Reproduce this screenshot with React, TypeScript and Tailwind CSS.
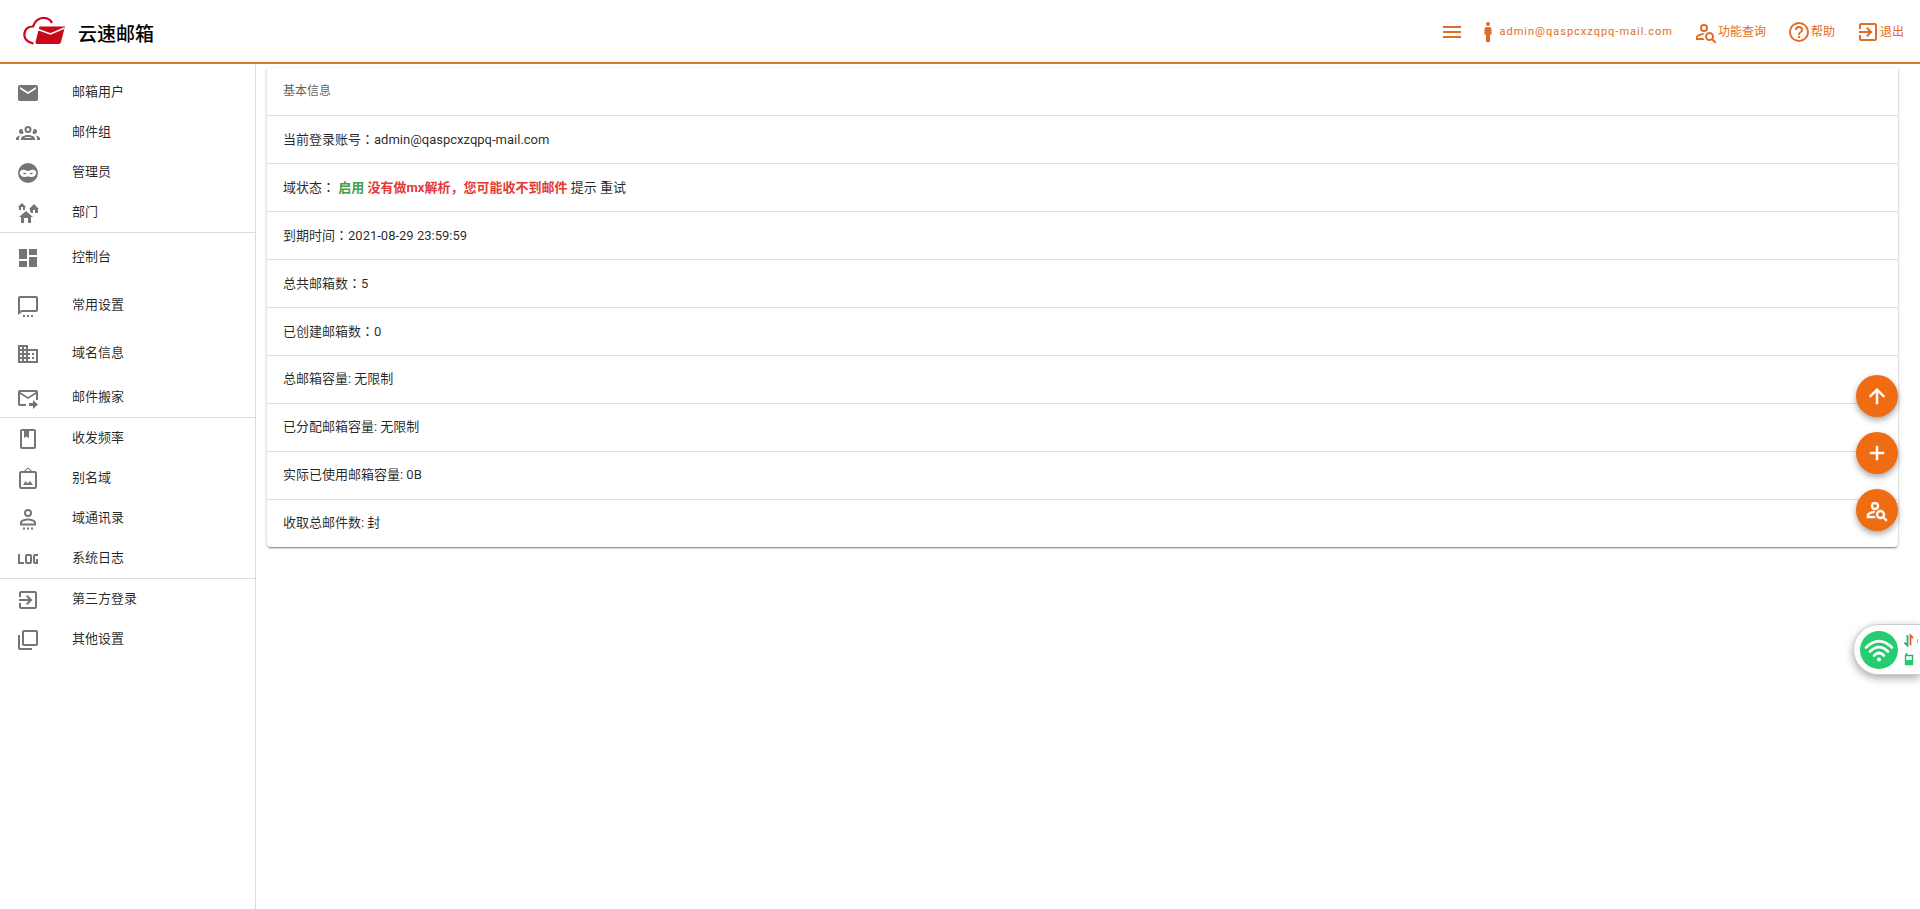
import React from 'react';

const icons = {
  email: 'M20 8l-8 5-8-5V6l8 5 8-5m0-2H4c-1.11 0-2 .89-2 2v12a2 2 0 0 0 2 2h16a2 2 0 0 0 2-2V6c0-1.11-.9-2-2-2z',
  group:
    'M12,5A3.5,3.5 0 0,0 8.5,8.5A3.5,3.5 0 0,0 12,12A3.5,3.5 0 0,0 15.5,8.5A3.5,3.5 0 0,0 12,5M12,7A1.5,1.5 0 0,1 13.5,8.5A1.5,1.5 0 0,1 12,10A1.5,1.5 0 0,1 10.5,8.5A1.5,1.5 0 0,1 12,7M5.5,8A2.5,2.5 0 0,0 3,10.5C3,11.44 3.53,12.25 4.29,12.68C4.65,12.88 5.06,13 5.5,13C5.94,13 6.35,12.88 6.71,12.68C7.08,12.47 7.39,12.17 7.62,11.81C6.89,10.86 6.5,9.7 6.5,8.5C6.5,8.41 6.5,8.31 6.5,8.22C6.2,8.08 5.86,8 5.5,8M18.5,8C18.14,8 17.8,8.08 17.5,8.22C17.5,8.31 17.5,8.41 17.5,8.5C17.5,9.7 17.11,10.86 16.38,11.81C16.5,12 16.63,12.15 16.78,12.3C16.94,12.45 17.1,12.58 17.29,12.68C17.65,12.88 18.06,13 18.5,13C18.94,13 19.35,12.88 19.71,12.68C20.47,12.25 21,11.44 21,10.5A2.5,2.5 0 0,0 18.5,8M12,14C9.66,14 5,15.17 5,17.5V19H19V17.5C19,15.17 14.34,14 12,14M4.71,14.55C2.78,14.78 0,15.76 0,17.5V19H3V17.07C3,16.06 3.69,15.22 4.71,14.55M19.29,14.55C20.31,15.22 21,16.06 21,17.07V19H24V17.5C24,15.76 21.22,14.78 19.29,14.55M12,16C13.53,16 15.24,16.5 16.23,17H7.77C8.76,16.5 10.47,16 12,16Z',
  ninja:
    'M12 2a10 10 0 1 0 0 20 10 10 0 0 0 0-20M5.500 9C8 8 10 9.300 12 10c2-.7 4-2 6.500-1 2 1.200 2.200 3.500 1 5-1 1.600-2.500 2-4.500 2-1.200 0-2-.5-3-.5s-1.800.5-3 .5c-2 0-3.500-.4-4.500-2-1.200-1.500-1-3.800 1-5M7 12.300c.8 1.200 2.600 1.400 3.500.4-.8-1-2.600-1.200-3.500-.4m10 0c-.9-.8-2.700-.6-3.500.4.9 1 2.700.8 3.500-.4',
  homes:
    'M17,16H15V22H12V17H8V22H5V16H3L10,10L17,16M6,2L10,6H9V9H7V6H5V9H3V6H2L6,2M18,3L23,8H22V12H19V9H17V12H15.34L14,10.87V8H13L18,3Z',
  dashboard: 'M13,3V9H21V3M13,21H21V11H13M3,21H11V15H3M3,13H11V3H3V13Z',
  message:
    'M4 2h16a2 2 0 0 1 2 2v12a2 2 0 0 1-2 2H6l-4 3V4a2 2 0 0 1 2-2m0 2v13l1.500-1H20V4zM7 21h2v2H7zm4 0h2v2h-2zm4 0h2v2h-2z',
  domain:
    'M18,15H16V17H18M18,11H16V13H18M20,19H12V17H14V15H12V13H14V11H12V9H20M10,7H8V5H10M10,11H8V9H10M10,15H8V13H10M10,19H8V17H10M6,7H4V5H6M6,11H4V9H6M6,15H4V13H6M6,19H4V17H6M12,7V3H2V21H22V7H12Z',
  send: 'M4 4h16a2 2 0 0 1 2 2v8h-2V8l-8 5-8-5v10h6v2H4a2 2 0 0 1-2-2V6a2 2 0 0 1 2-2m0 2l8 5 8-5zM17 14l5 4.500-5 4.500v-3h-4v-3h4z',
  book: 'M18 2a2 2 0 0 1 2 2v16a2 2 0 0 1-2 2H6a2 2 0 0 1-2-2V4a2 2 0 0 1 2-2zm0 2h-5v7l-2.500-1.500L8 11V4H6v16h12z',
  frame:
    'M12 .5L16 4h3a2 2 0 0 1 2 2v14a2 2 0 0 1-2 2H5a2 2 0 0 1-2-2V6a2 2 0 0 1 2-2h3zM12 1.700L9.400 4h5.200zM5 6v14h14V6zm2 12l2.500-4 2 2.500L14 14l3 4z',
  contact:
    'M12 2a4 4 0 1 1 0 8 4 4 0 0 1 0-8m0 2a2 2 0 1 0 0 4 2 2 0 0 0 0-4m0 7.500c2.700 0 8 1.300 8 4v3H4v-3c0-2.700 5.300-4 8-4m0 2c-3 0-6 1.400-6 2v1h12v-1c0-.6-3-2-6-2M7 20.500h2v2H7zm4 0h2v2h-2zm4 0h2v2h-2z',
  log: 'M2 7h2v8h4v2H2zm9 0h3a2 2 0 0 1 2 2v6a2 2 0 0 1-2 2h-3a2 2 0 0 1-2-2V9a2 2 0 0 1 2-2m0 2v6h3V9zm8-2h3v2h-3v6h1v-3h2v5h-3a2 2 0 0 1-2-2V9a2 2 0 0 1 2-2z',
  exit: 'M19,3H5C3.89,3 3,3.89 3,5V9H5V5H19V19H5V15H3V19A2,2 0 0,0 5,21H19A2,2 0 0,0 21,19V5C21,3.89 20.1,3 19,3M10.08,15.58L11.5,17L16.5,12L11.5,7L10.08,8.41L12.67,11H3V13H12.67L10.08,15.58Z',
  copies:
    'M20,16V4H8V16H20M22,16A2,2 0 0,1 20,18H8C6.89,18 6,17.1 6,16V4C6,2.89 6.89,2 8,2H20A2,2 0 0,1 22,4V16M16,20V22H4A2,2 0 0,1 2,20V7H4V20H16Z',
  menu: 'M3,6H21V8H3V6M3,11H21V13H3V11M3,16H21V18H3V16Z',
  human:
    'M12,2A2,2 0 0,1 14,4A2,2 0 0,1 12,6A2,2 0 0,1 10,4A2,2 0 0,1 12,2M10.5,7H13.5A2,2 0 0,1 15.5,9V14.5H14V22H10V14.5H8.5V9A2,2 0 0,1 10.5,7Z',
  search:
    'M10 13c-.58 0-1.200.06-1.840.16C4.900 13.700 2 15.200 2 17v3h8.500a6 6 0 0 1-1.100-1.900H3.900V17c0-.6 2.300-1.900 5.300-2.100A6 6 0 0 1 10 13M10 4a4 4 0 1 0 0 8 4 4 0 0 0 0-8m0 1.900a2.100 2.100 0 1 1 0 4.200 2.100 2.100 0 0 1 0-4.200M15.500 12a4.500 4.500 0 1 0 2.400 8.300L21 23.400 22.400 22l-3.100-3.100A4.500 4.500 0 0 0 15.500 12m0 2a2.500 2.500 0 1 1 0 5 2.500 2.500 0 0 1 0-5',
  help: 'M11,18H13V16H11V18M12,2A10,10 0 0,0 2,12A10,10 0 0,0 12,22A10,10 0 0,0 22,12A10,10 0 0,0 12,2M12,20C7.59,20 4,16.41 4,12C4,7.59 7.59,4 12,4C16.41,4 20,7.59 20,12C20,16.41 16.41,20 12,20M12,6A4,4 0 0,0 8,10H10A2,2 0 0,1 12,8A2,2 0 0,1 14,10C14,12 11,11.75 11,15H13C13,12.75 16,12.5 16,10A4,4 0 0,0 12,6Z',
  up: 'M13,20H11V8L5.5,13.5L4.08,12.08L12,4.16L19.92,12.08L18.5,13.5L13,8V20Z',
  plus: 'M19,13H13V19H11V13H5V11H11V5H13V11H19V13Z',
};

type IconName = keyof typeof icons;

function Icon({ name, bold = false }: { name: IconName; bold?: boolean }) {
  return (
    <svg
      viewBox="0 0 24 24"
      className="size-6 shrink-0"
      fill="currentColor"
      fillRule="evenodd"
      stroke={bold ? 'currentColor' : 'none'}
      strokeWidth="0.500"
      aria-hidden="true"
    >
      <path d={icons[name]} />
    </svg>
  );
}

type Item = { icon: IconName; label: string; size: string };

const short = 'h-10';
const tall = 'h-12';

const groups: Item[][] = [
  [
    { icon: 'email', label: '邮箱用户', size: short },
    { icon: 'group', label: '邮件组', size: short },
    { icon: 'ninja', label: '管理员', size: short },
    { icon: 'homes', label: '部门', size: short },
  ],
  [
    { icon: 'dashboard', label: '控制台', size: tall },
    { icon: 'message', label: '常用设置', size: tall },
    { icon: 'domain', label: '域名信息', size: tall },
    { icon: 'send', label: '邮件搬家', size: short },
  ],
  [
    { icon: 'book', label: '收发频率', size: short },
    { icon: 'frame', label: '别名域', size: short },
    { icon: 'contact', label: '域通讯录', size: short },
    { icon: 'log', label: '系统日志', size: short },
  ],
  [
    { icon: 'exit', label: '第三方登录', size: short },
    { icon: 'copies', label: '其他设置', size: short },
  ],
];

/* Full-width colon, centred in its square. */
function Colon() {
  return <span className="font-['Noto_Sans_CJK_TC',sans-serif]" lang="zh-Hant">：</span>;
}

const rows: React.ReactNode[] = [
  <>当前登录账号<Colon />admin@qaspcxzqpq-mail.com</>,
  <>
    域状态<Colon /> <b className="text-[#43a047]">启用</b>{' '}
    <b className="text-[#e53935]">没有做mx解析，您可能收不到邮件</b> <a href="#tip">提示</a>{' '}
    <a href="#retry">重试</a>
  </>,
  <>到期时间<Colon />2021-08-29 23:59:59</>,
  <>总共邮箱数<Colon />5</>,
  <>已创建邮箱数<Colon />0</>,
  '总邮箱容量: 无限制',
  '已分配邮箱容量: 无限制',
  '实际已使用邮箱容量: 0B',
  '收取总邮件数: 封',
];

const fabs: { icon: IconName; label: string }[] = [
  { icon: 'up', label: '返回顶部' },
  { icon: 'plus', label: '添加' },
  { icon: 'search', label: '功能查询' },
];

function Logo() {
  return (
    <svg viewBox="0 0 44 30" className="h-[30px] w-11" aria-hidden="true">
      <path
        d="M11.500 26.500C5 25.500 1.500 21 2.500 16c.8-4 4-6.500 8.500-6.500C13 4 17 1 21.500 1c4 0 7 2 8.500 5"
        fill="none"
        stroke="#c8071a"
        strokeWidth="2.200"
      />
      <path d="M17.500 9.500h25.500l-4 15.500q-.5 2-2.500 2H15q-2 0-1.500-2z" fill="#c8071a" />
      <path d="M16 12.500L28.500 17L42.500 11" fill="none" stroke="#fff" strokeWidth="1.600" />
    </svg>
  );
}

export default function App() {
  return (
    <div className="flex min-h-screen flex-col bg-white font-[Roboto,'Noto_Sans_CJK_SC',sans-serif] text-[13px] text-black/85">
      <header className="flex h-16 items-center justify-between border-b-2 border-[#d87a2c] pt-0.5 pr-4 pl-[22px]">
        <a href="#home" className="flex items-center gap-3 text-[19px] font-medium text-black">
          <Logo />
          <span className="pt-1.5">云速邮箱</span>
        </a>
        <nav className="flex items-center text-xs text-[#e06c28]">
          <button type="button" aria-label="菜单" className="mr-3">
            <Icon name="menu" />
          </button>
          <a href="#account" className="mr-[21px] flex items-center text-[11px] tracking-[1px]">
            <Icon name="human" />
            admin@qaspcxzqpq-mail.com
          </a>
          <a href="#search" className="mr-[21px] flex items-center">
            <Icon name="search" />
            功能查询
          </a>
          <a href="#help" className="mr-[21px] flex items-center">
            <Icon name="help" />
            帮助
          </a>
          <a href="#logout" className="flex items-center">
            <Icon name="exit" />
            退出
          </a>
        </nav>
      </header>

      <div className="flex grow">
        <aside className="w-64 shrink-0 border-r border-[#dcdcdc] pt-2">
          {groups.map((items, g) => (
            <ul key={g} className="border-b border-[#dcdcdc] last:border-b-0">
              {items.map((item) => (
                <li key={item.label}>
                  <a href="#section" className={`flex items-center gap-8 px-4 ${item.size}`}>
                    <span className="pt-0.5 text-[#757575]">
                      <Icon name={item.icon} />
                    </span>
                    <span>{item.label}</span>
                  </a>
                </li>
              ))}
            </ul>
          ))}
        </aside>

        <main className="min-w-0 grow pt-1 pr-[22px] pl-[11px]">
          <section className="rounded-b bg-white shadow-[0_2px_1px_-1px_rgba(0,0,0,0.3),0_1px_3px_rgba(0,0,0,0.3)]">
            <h2 className="h-[47px] px-4 text-xs leading-[46px] text-black/65">基本信息</h2>
            <ul>
              {rows.map((row, i) => (
                <li key={i} className="h-12 border-t border-[#dedede] px-4 leading-[46px]">
                  {row}
                </li>
              ))}
            </ul>
          </section>
        </main>
      </div>

      <div className="fixed top-[375px] right-[22px] flex flex-col gap-[15px]">
        {fabs.map((fab) => (
          <button
            key={fab.icon}
            type="button"
            aria-label={fab.label}
            className="flex size-[42px] items-center justify-center rounded-full bg-[#ef6c13] text-white shadow-[0_3px_6px_rgba(0,0,0,0.35)]"
          >
            <Icon name={fab.icon} bold />
          </button>
        ))}
      </div>

      <div className="fixed top-[624px] right-0 flex h-[51px] w-[67px] items-center gap-1 rounded-l-full border border-r-0 border-[#ccc] bg-white pl-[6px] shadow-[0_3px_8px_rgba(0,0,0,0.35)]">
        <svg viewBox="0 0 38 38" className="size-[38px] shrink-0" aria-hidden="true">
          <circle cx="19" cy="19" r="19" fill="#26cc70" />
          <g fill="none" stroke="#fff" strokeWidth="2.600" strokeLinecap="round">
            <path d="M6 16.500Q19 3.500 32 16.500" />
            <path d="M10 20.500Q19 11.500 28 20.500" />
            <path d="M14 24.500Q19 19.500 24 24.500" />
          </g>
          <circle cx="19" cy="28.500" r="2" fill="#fff" />
        </svg>
        <svg viewBox="0 0 16 34" className="h-[34px] w-4 shrink-0" aria-hidden="true">
          <path d="M5.500 2v10.500L2.500 9.500" fill="none" stroke="#1fb868" strokeWidth="1.800" />
          <path d="M8.500 12.500V2.500L11 5" fill="none" stroke="#ee5a33" strokeWidth="1.800" />
          <path d="M15.500 6v4" stroke="#f6a05c" strokeWidth="1" />
          <path d="M3.500 22.500h7v9h-7zM4.500 20v3" fill="none" stroke="#1fb868" strokeWidth="1.400" />
          <path d="M3 27h8v5H3z" fill="#26cc70" />
        </svg>
      </div>
    </div>
  );
}
